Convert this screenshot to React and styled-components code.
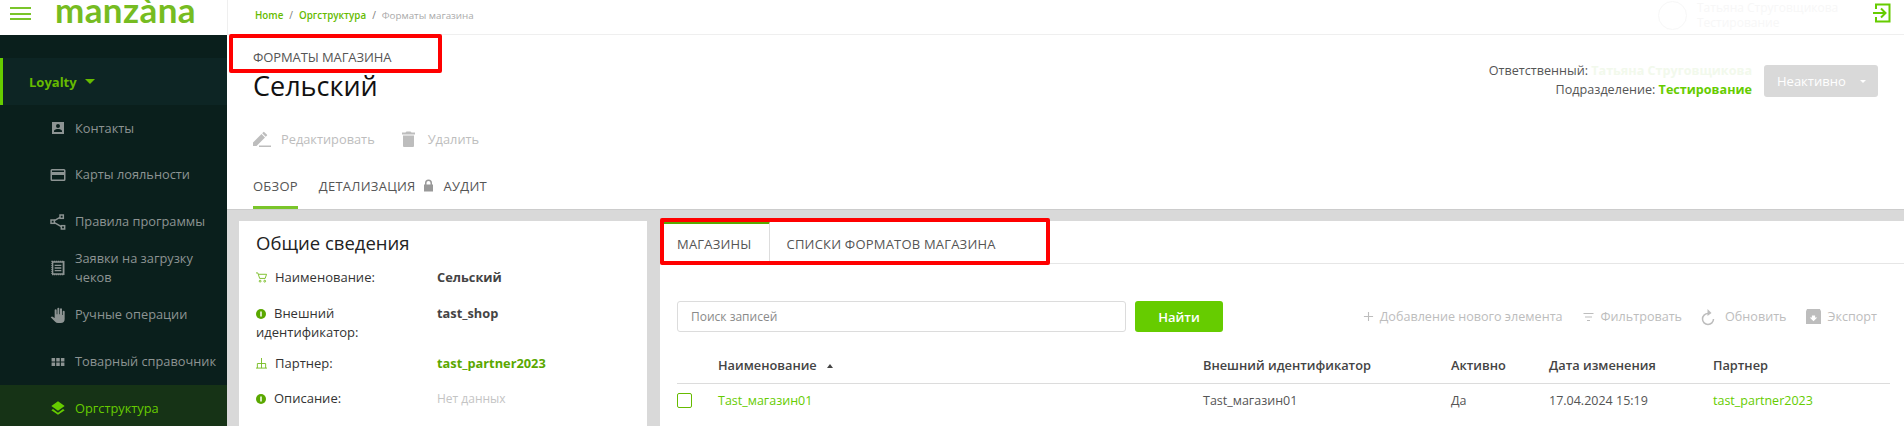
import React from 'react'
import styled, { createGlobalStyle } from 'styled-components'

const GlobalStyle = createGlobalStyle`
  html, body {
    margin: 0;
    height: 426px;
    overflow: hidden;
    background: #d9d9d9;
    font-family: "Open Sans", "Noto Sans", sans-serif;
    font-size: 13px;
    color: #444;
  }
  * { box-sizing: border-box; }
`

const Page = styled.div`
  display: flex;
  width: 1904px;
  height: 426px;
  overflow: hidden;
`

const Sidebar = styled.aside`
  width: 227px;
  flex-shrink: 0;
  background: #0a1f1c;
  display: flex;
  flex-direction: column;
`

const LogoBar = styled.div`
  height: 35px;
  flex-shrink: 0;
  background: #fff;
  display: flex;
  align-items: flex-start;
  padding-left: 10px;
  overflow: hidden;
`

const Burger = styled.div`
  width: 21px;
  height: 13px;
  margin-top: 7px;
  display: flex;
  flex-direction: column;
  justify-content: space-between;
  div { height: 2px; background: #7ac52a; }
`

const Logo = styled.div`
  margin-left: 24px;
  font-family: "Lato", sans-serif;
  font-weight: 700;
  font-size: 35px;
  letter-spacing: 0.4px;
  line-height: 18px;
  color: #76bc21;
`

const LoyaltyItem = styled.div`
  margin-top: 23px;
  height: 47px;
  flex-shrink: 0;
  background: #0d2524;
  border-left: 3px solid #66cc00;
  display: flex;
  align-items: center;
  padding-left: 26px;
  gap: 8px;
  font-weight: 700;
  color: #66bb00;
  font-size: 13px;
`

const Caret = styled.span`
  width: 0;
  height: 0;
  border-left: ${p => p.$size || 5}px solid transparent;
  border-right: ${p => p.$size || 5}px solid transparent;
  border-top: ${p => p.$size || 5}px solid ${p => p.$color || '#66bb00'};
`

const NavItem = styled.div`
  height: 46.67px;
  flex-shrink: 0;
  display: flex;
  align-items: center;
  gap: 8px;
  padding-left: 49px;
  font-size: 12.8px;
  line-height: 19px;
  color: ${p => (p.$active ? '#66cc00' : '#8d9493')};
  background: ${p => (p.$active ? '#163316' : 'transparent')};
`

const NavIcon = styled.span`
  width: 18px;
  flex-shrink: 0;
  display: flex;
  justify-content: center;
`

const Main = styled.main`
  flex: 1;
  display: flex;
  flex-direction: column;
  min-width: 0;
`

const TopBar = styled.div`
  height: 35px;
  flex-shrink: 0;
  background: #fff;
  border-bottom: 1px solid #efefef;
  border-left: 1px solid #efefef;
  display: flex;
  align-items: center;
  padding: 0 13px 4px 27px;
  font-size: 9.8px;
  color: #999;
`

const Crumb = styled.span`
  color: ${p => (p.$link ? '#66bb00' : '#aaa')};
  font-weight: ${p => (p.$link ? 600 : 400)};
`

const Slash = styled.span`
  margin: 0 6px;
  color: #777;
  font-size: 10px;
`

const FadedUser = styled.div`
  margin-left: auto;
  margin-right: 28px;
  width: 187px;
  display: flex;
  align-items: center;
  gap: 10px;
  color: #f7f7f7;
  font-size: 12px;
  line-height: 15px;
  white-space: nowrap;
`

const FadedAvatar = styled.div`
  width: 29px;
  height: 29px;
  flex-shrink: 0;
  border-radius: 50%;
  border: 1px solid #f7f7f7;
`

const ExitIcon = styled.div`
  display: flex;
  margin-bottom: 4px;
`

const Head = styled.div`
  background: #fff;
  height: 175px;
  flex-shrink: 0;
  padding: 0 26px 0 26px;
  display: flex;
  justify-content: space-between;
  border-bottom: 1px solid #cccccc;
`

const HeadMain = styled.div`
  display: flex;
  flex-direction: column;
`

const HeadSide = styled.div`
  display: flex;
  align-items: flex-start;
  gap: 12px;
  padding-top: 27px;
`

const Kicker = styled.div`
  font-size: 13px;
  line-height: 18px;
  margin-top: 13px;
  color: #555;
  letter-spacing: -0.1px;
`

const Title = styled.h1`
  margin: 3px 0 0;
  font-weight: 400;
  font-size: 27px;
  line-height: 34px;
  color: #111;
`

const Actions = styled.div`
  display: flex;
  align-items: center;
  margin-top: 23px;
  height: 26px;
  color: #bdbdbd;
  font-size: 12.8px;
`

const Action = styled.div`
  display: flex;
  align-items: center;
  gap: ${p => p.$gap}px;
  margin-right: 27px;
`

const PageTabs = styled.div`
  display: flex;
  align-items: flex-start;
  margin-top: 25px;
  font-size: 13px;
  color: #555;
  letter-spacing: 0.25px;
`

const PageTab = styled.div`
  height: 32px;
  line-height: 19px;
  display: flex;
  gap: 7px;
  margin-right: ${p => p.$mr || 0}px;
  border-bottom: ${p => (p.$active ? '3px solid #7ac52a' : 'none')};
`

const Owner = styled.div`
  text-align: right;
  font-size: 12.6px;
  line-height: 18.5px;
  color: #555;
`

const OwnerValue = styled.span`
  font-weight: 700;
  color: ${p => p.$color};
`

const StatusButton = styled.div`
  width: 114px;
  height: 32px;
  margin-top: 3px;
  background: #d9d9d9;
  border-radius: 3px;
  color: #fff;
  font-size: 13px;
  display: flex;
  align-items: center;
  justify-content: space-between;
  padding: 0 12px 0 13px;
`

const Body = styled.div`
  flex: 1;
  display: flex;
  padding: 11px 0 0 12px;
  gap: 13px;
  min-height: 0;
`

const InfoCard = styled.section`
  width: 408px;
  flex-shrink: 0;
  background: #fff;
  padding: 9px 17px 0;
`

const InfoTitle = styled.h2`
  margin: 0 0 12px;
  font-weight: 400;
  font-size: 18.5px;
  line-height: 26px;
  color: #222;
`

const InfoRow = styled.div`
  display: grid;
  grid-template-columns: 181px 1fr;
  margin-bottom: ${p => p.$mb}px;
  font-size: 13px;
  line-height: 19px;
`

const InfoLabel = styled.div`
  color: #333;
  svg { vertical-align: -1px; margin-right: 8px; }
`

const InfoValue = styled.div`
  font-weight: ${p => (p.$muted ? 400 : 700)};
  font-size: ${p => (p.$muted ? 12 : 12.8)}px;
  color: ${p => (p.$muted ? '#c4c4c4' : p.$link ? '#5aa800' : '#444')};
`

const ListPanel = styled.section`
  flex: 1;
  min-width: 0;
  background: #fff;
  display: flex;
  flex-direction: column;
`

const Tabs = styled.div`
  display: flex;
  height: 43px;
  flex-shrink: 0;
  border-bottom: 1px solid #e6e6e6;
`

const Tab = styled.div`
  padding: 0 17px;
  display: flex;
  align-items: center;
  font-size: 13px;
  letter-spacing: 0.2px;
  color: #555;
  border-top: 3px solid ${p => (p.$active ? '#5aa800' : 'transparent')};
  border-right: ${p => (p.$active ? '1px solid #dddddd' : 'none')};
`

const Toolbar = styled.div`
  display: flex;
  align-items: center;
  margin: 37px 27px 0 17px;
  height: 31px;
  flex-shrink: 0;
`

const SearchInput = styled.div`
  width: 449px;
  height: 31px;
  border: 1px solid #dcdcdc;
  border-radius: 3px;
  padding-left: 13px;
  display: flex;
  align-items: center;
  color: #8a8a8a;
  font-size: 12px;
`

const FindButton = styled.div`
  margin-left: 9px;
  width: 88px;
  height: 31px;
  background: #66cc00;
  border-radius: 3px;
  color: #fff;
  font-weight: 600;
  font-size: 13px;
  display: flex;
  align-items: center;
  justify-content: center;
`

const ToolActions = styled.div`
  margin-left: auto;
  display: flex;
  align-items: center;
  gap: 19px;
  color: #bdbdbd;
  font-size: 12.6px;
`

const ToolAction = styled.div`
  display: flex;
  align-items: center;
  gap: ${p => p.$gap}px;
`

const Row = styled.div`
  display: grid;
  grid-template-columns: 41px 485px 248px 98px 164px 1fr;
  align-items: center;
  margin: ${p => p.$mt || 0}px 14px 0 17px;
  height: ${p => p.$h}px;
  flex-shrink: 0;
  font-size: ${p => (p.$head ? 12.8 : 12.5)}px;
  border-bottom: ${p => (p.$head ? '1px solid #dcdcdc' : 'none')};
  font-weight: ${p => (p.$head ? 600 : 400)};
  color: ${p => (p.$head ? '#444' : '#555')};
`

const SortMark = styled.span`
  display: inline-block;
  margin-left: 7px;
  vertical-align: 2px;
  border-left: 3px solid transparent;
  border-right: 3px solid transparent;
  border-bottom: 4px solid #444;
`

const Check = styled.div`
  width: 15px;
  height: 15px;
  border: 1px solid #66bb00;
  border-radius: 2px;
`

const RowLink = styled.span`
  color: #66cc00;
`

const Overlay = styled.div`
  position: fixed;
  inset: 0;
  pointer-events: none;
`

const Highlight = styled.div`
  position: absolute;
  left: ${p => p.$l}px;
  top: ${p => p.$t}px;
  width: ${p => p.$w}px;
  height: ${p => p.$h}px;
  border: 4px solid #ff0000;
  border-radius: 2px;
`

const icon = { width: 16, height: 16, viewBox: '0 0 24 24', fill: '#8d9493' }

const InfoDot = () => (
  <svg width="10" height="10" viewBox="0 0 10 10">
    <circle cx="5" cy="5" r="5" fill="#5aa800" />
    <path d="M5 2.500v5" stroke="#fff" strokeWidth="1.500" />
  </svg>
)

const App = () => (
  <>
    <GlobalStyle />
    <Page>
      <Sidebar>
        <LogoBar>
          <Burger><div /><div /><div /></Burger>
          <Logo>manzàna</Logo>
        </LogoBar>
        <LoyaltyItem>Loyalty <Caret /></LoyaltyItem>
        <NavItem>
          <NavIcon><svg {...icon}><path d="M3 3h18v18H3zM12 6a3 3 0 1 0 0 6 3 3 0 0 0 0-6zM6 18h12v-1.500c0-2-4-3-6-3s-6 1-6 3z" fillRule="evenodd" /></svg></NavIcon>
          Контакты
        </NavItem>
        <NavItem>
          <NavIcon><svg {...icon} width="18" height="18"><path d="M20 4H4a2 2 0 0 0-2 2v12a2 2 0 0 0 2 2h16a2 2 0 0 0 2-2V6a2 2 0 0 0-2-2zm0 14H4v-6h16zm0-10H4V6h16z" /></svg></NavIcon>
          Карты лояльности
        </NavItem>
        <NavItem>
          <NavIcon>
            <svg {...icon} fill="none" stroke="#8d9493" strokeWidth="2.200">
              <rect x="1.500" y="9" width="5" height="5" />
              <rect x="15" y="1.500" width="5" height="5" />
              <rect x="17" y="17.500" width="5" height="5" />
              <path d="M6.500 10l8.500-5M6.500 13l10.500 6" />
            </svg>
          </NavIcon>
          Правила программы
        </NavItem>
        <NavItem>
          <NavIcon>
            <svg {...icon} fill="none" stroke="#8d9493" strokeWidth="2">
              <path d="M3 2h18v20H3z" strokeDasharray="2 1" />
              <path d="M4 3h16v18H4zM7 8h10M7 12h10M7 16h10" />
            </svg>
          </NavIcon>
          <span>Заявки на загрузку чеков</span>
        </NavItem>
        <NavItem>
          <NavIcon><svg {...icon}><path d="M22 7v11a6 6 0 0 1-6 6h-4a6 6 0 0 1-4.300-1.800L1 15.500s1.300-1.300 2-1.300c.3 0 .6.100.8.300L7 16.500V5a1.500 1.500 0 0 1 3 0v6h1V2.500a1.500 1.500 0 0 1 3 0V11h1V3.500a1.500 1.500 0 0 1 3 0V12h1V7a1 1 0 0 1 3 0z" /></svg></NavIcon>
          Ручные операции
        </NavItem>
        <NavItem>
          <NavIcon><svg {...icon} width="14" height="14"><path d="M1 5h6v6H1zM9 5h6v6H9zM17 5h6v6h-6zM1 13h6v6H1zM9 13h6v6H9zM17 13h6v6h-6z" /></svg></NavIcon>
          Товарный справочник
        </NavItem>
        <NavItem $active>
          <NavIcon><svg {...icon} fill="#66cc00"><path d="M12 2L2 9l10 7 10-7zM4.500 13.500L2 15.300l10 7 10-7-2.500-1.800L12 19z" /></svg></NavIcon>
          Оргструктура
        </NavItem>
      </Sidebar>
      <Main>
        <TopBar>
          <Crumb $link>Home</Crumb><Slash>/</Slash>
          <Crumb $link>Оргструктура</Crumb><Slash>/</Slash>
          <Crumb>Форматы магазина</Crumb>
          <FadedUser>
            <FadedAvatar />
            <div>Татьяна Струговщикова<br />Тестирование</div>
          </FadedUser>
          <ExitIcon>
            <svg width="18" height="20" viewBox="0 0 18 20" fill="none" stroke="#66cc00" strokeWidth="2"><path d="M3 6V1.500h13.500v17H3V14M0 10h12M8 5.500l4.500 4.500L8 14.500" /></svg>
          </ExitIcon>
        </TopBar>
        <Head>
          <HeadMain>
            <Kicker>ФОРМАТЫ МАГАЗИНА</Kicker>
            <Title>Сельский</Title>
            <Actions>
              <Action $gap={10}>
                <svg width="18" height="16" viewBox="0 0 18 16" fill="#bdbdbd"><path d="M0 11.500V15h3.500L12 6.500 8.500 3zM13.800 4.800a.8.800 0 0 0 0-1.200L11.400 1.200a.8.800 0 0 0-1.200 0L9.200 2.300l3.500 3.500z" /><path d="M6 14.500h12V16H6z" /></svg>
                Редактировать
              </Action>
              <Action $gap={13}>
                <svg width="13" height="16" viewBox="0 0 13 16" fill="#bdbdbd"><path d="M1 4.500h11V15a1 1 0 0 1-1 1H2a1 1 0 0 1-1-1zM0 1.500h3.500L4.500.5h4l1 1H13v2H0z" /></svg>
                Удалить
              </Action>
            </Actions>
            <PageTabs>
              <PageTab $active $mr={21}>ОБЗОР</PageTab>
              <PageTab $mr={10}>
                ДЕТАЛИЗАЦИЯ
                <svg width="11" height="17" viewBox="0 0 11 14" fill="#999"><path d="M2 6V4.500a3.500 3.500 0 0 1 7 0V6h1v7H1V6zm1.500 0h4V4.500a2 2 0 0 0-4 0z" /></svg>
              </PageTab>
              <PageTab>АУДИТ</PageTab>
            </PageTabs>
          </HeadMain>
          <HeadSide>
            <Owner>
              Ответственный: <OwnerValue $color="#f2f9ec">Татьяна Струговщикова</OwnerValue><br />
              Подразделение: <OwnerValue $color="#66cc00">Тестирование</OwnerValue>
            </Owner>
            <StatusButton>Неактивно <Caret $size={3.5} $color="#fff" /></StatusButton>
          </HeadSide>
        </Head>
        <Body>
          <InfoCard>
            <InfoTitle>Общие сведения</InfoTitle>
            <InfoRow $mb={17}>
              <InfoLabel>
                <svg width="11" height="11" viewBox="0 0 12 12" fill="none" stroke="#76bc21" strokeWidth="1"><path d="M0 1h2l2 6h6l1.500-4.500H3" /><circle cx="4.500" cy="10" r="1" /><circle cx="9.500" cy="10" r="1" /></svg>
                Наименование:
              </InfoLabel>
              <InfoValue>Сельский</InfoValue>
            </InfoRow>
            <InfoRow $mb={12}>
              <InfoLabel>
                <InfoDot />
                Внешний идентификатор:
              </InfoLabel>
              <InfoValue>tast_shop</InfoValue>
            </InfoRow>
            <InfoRow $mb={16}>
              <InfoLabel>
                <svg width="11" height="11" viewBox="0 0 12 12" fill="none" stroke="#76bc21" strokeWidth="1"><path d="M6 0v11M1.500 11V6h9v5M0 11h12" /></svg>
                Партнер:
              </InfoLabel>
              <InfoValue $link>tast_partner2023</InfoValue>
            </InfoRow>
            <InfoRow $mb={0}>
              <InfoLabel>
                <InfoDot />
                Описание:
              </InfoLabel>
              <InfoValue $muted>Нет данных</InfoValue>
            </InfoRow>
          </InfoCard>
          <ListPanel>
            <Tabs>
              <Tab $active>МАГАЗИНЫ</Tab>
              <Tab>СПИСКИ ФОРМАТОВ МАГАЗИНА</Tab>
            </Tabs>
            <Toolbar>
              <SearchInput>Поиск записей</SearchInput>
              <FindButton>Найти</FindButton>
              <ToolActions>
                <ToolAction $gap={6}>
                  <svg width="11" height="11" viewBox="0 0 12 12" stroke="#bdbdbd" strokeWidth="1.200"><path d="M6 1v10M1 6h10" /></svg>
                  Добавление нового элемента
                </ToolAction>
                <ToolAction $gap={6}>
                  <svg width="13" height="10" viewBox="0 0 12 10" stroke="#bdbdbd" strokeWidth="1.200"><path d="M1 1.500h10M2.500 5h7M4.500 8.500h3" /></svg>
                  Фильтровать
                </ToolAction>
                <ToolAction $gap={10}>
                  <svg width="14" height="18" viewBox="0 0 14 18" fill="none" stroke="#bdbdbd" strokeWidth="1.500"><path d="M7 5.500a5.500 5.500 0 1 0 5.500 5.500" /><path d="M6.500 1l4 4-4 3z" fill="#bdbdbd" stroke="none" /></svg>
                  Обновить
                </ToolAction>
                <ToolAction $gap={7}>
                  <svg width="15" height="15" viewBox="0 0 14 14"><path d="M0 2l1-2h12l1 2v12H0z" fill="#bdbdbd" /><path d="M5.500 6h3v2H10.500L7 11.500 3.500 8H5.500z" fill="#fff" /></svg>
                  Экспорт
                </ToolAction>
              </ToolActions>
            </Toolbar>
            <Row $head $h={37} $mt={15}>
              <span />
              <span>Наименование <SortMark /></span>
              <span>Внешний идентификатор</span>
              <span>Активно</span>
              <span>Дата изменения</span>
              <span>Партнер</span>
            </Row>
            <Row $h={32}>
              <Check />
              <RowLink>Tast_магазин01</RowLink>
              <span>Tast_магазин01</span>
              <span>Да</span>
              <span>17.04.2024 15:19</span>
              <RowLink>tast_partner2023</RowLink>
            </Row>
          </ListPanel>
        </Body>
      </Main>
    </Page>
    <Overlay>
      <Highlight $l={229} $t={34} $w={213} $h={39} />
      <Highlight $l={660} $t={218} $w={390} $h={47} />
    </Overlay>
  </>
)

export default App
